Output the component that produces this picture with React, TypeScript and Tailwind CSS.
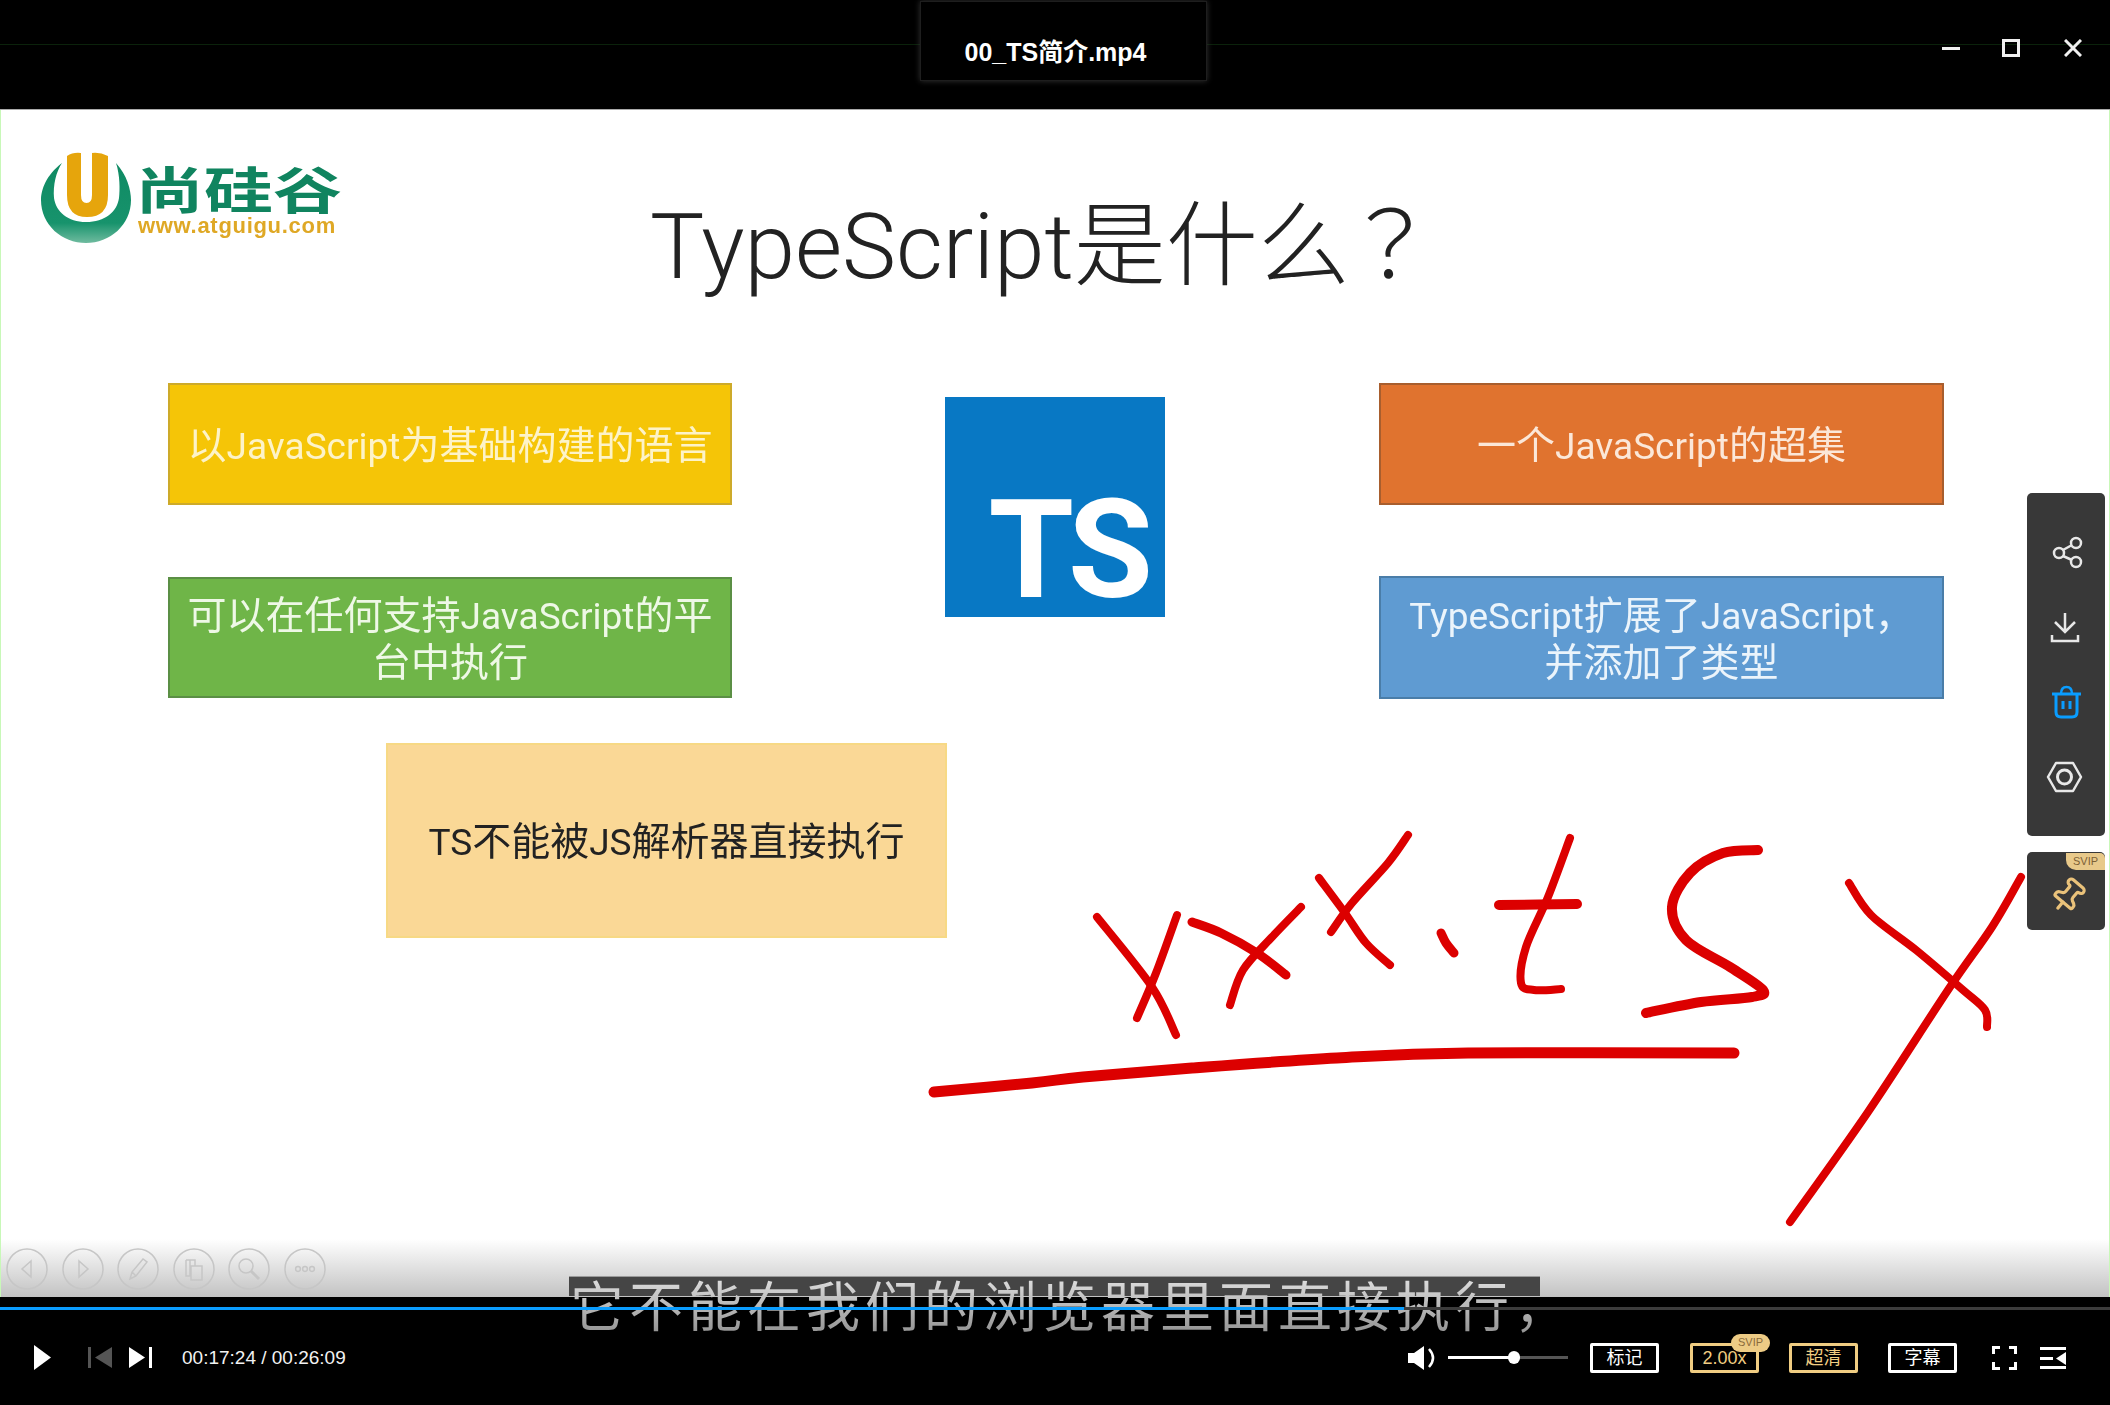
import React from "react";
import { Pin } from "lucide-react";

type P = [number, number];

function smooth(pts: P[]): string {
  let d = `M${pts[0][0]} ${pts[0][1]}`;
  for (let i = 0; i < pts.length - 1; i++) {
    const p0 = pts[Math.max(i - 1, 0)];
    const p1 = pts[i];
    const p2 = pts[i + 1];
    const p3 = pts[Math.min(i + 2, pts.length - 1)];
    const c1x = p1[0] + (p2[0] - p0[0]) / 6;
    const c1y = p1[1] + (p2[1] - p0[1]) / 6;
    const c2x = p2[0] - (p3[0] - p1[0]) / 6;
    const c2y = p2[1] - (p3[1] - p1[1]) / 6;
    d += ` C${c1x} ${c1y} ${c2x} ${c2y} ${p2[0]} ${p2[1]}`;
  }
  return d;
}

const strokes: { w: number; pts: P[] }[] = [
  { w: 8, pts: [[1096, 917], [1151, 987], [1175, 1035]] },
  { w: 8, pts: [[1176, 915], [1155, 973], [1136, 1018]] },
  { w: 9, pts: [[1191, 922], [1220, 933], [1256, 953], [1285, 975]] },
  { w: 8, pts: [[1300, 907], [1271, 937], [1242, 970], [1229, 1005]] },
  { w: 8, pts: [[1318, 878], [1344, 913], [1365, 943], [1389, 965]] },
  { w: 8, pts: [[1407, 835], [1387, 863], [1351, 903], [1330, 932]] },
  { w: 9, pts: [[1440, 933], [1445, 943], [1453, 953]] },
  { w: 8, pts: [[1569, 838], [1547, 897], [1525, 947], [1520, 983], [1533, 990], [1560, 989]] },
  { w: 10, pts: [[1498, 905], [1576, 904]] },
  { w: 10, pts: [[1757, 850], [1722, 853], [1689, 873], [1671, 907], [1685, 940], [1729, 967], [1762, 990], [1751, 997], [1700, 1002], [1645, 1013]] },
  { w: 8, pts: [[1848, 883], [1870, 915], [1915, 950], [1962, 990], [1984, 1010], [1986, 1027]] },
  { w: 8, pts: [[2020, 877], [1991, 927], [1947, 990], [1867, 1112], [1789, 1222]] },
  { w: 11, pts: [[933, 1092], [1031, 1083], [1082, 1077], [1191, 1068], [1336, 1058], [1467, 1053], [1733, 1053]] },
];

function Handwriting() {
  return (
    <svg className="absolute left-0 top-0 w-[2110px] h-[1187px]" viewBox="0 110 2110 1187" fill="none">
      {strokes.map((s, i) => (
        <path key={i} d={smooth(s.pts)} stroke="#dc0000" strokeWidth={s.w} strokeLinecap="round" strokeLinejoin="round" />
      ))}
    </svg>
  );
}

function LogoMark() {
  return (
    <svg className="w-[95px] h-[95px] shrink-0" viewBox="40 150 95 95">
      <defs>
        <linearGradient id="lg" x1="0" y1="0" x2="0" y2="1">
          <stop offset="0" stopColor="#0f8a63" />
          <stop offset="0.75" stopColor="#17936c" />
          <stop offset="1" stopColor="#6fbb9f" />
        </linearGradient>
      </defs>
      <path d="M62 163 C46 175 41 190 41 200 C41 225 62 243 86 243 C110 243 131 225 131 200 C131 190 127 175 116 163 C120 175 120 190 119 198 C117 212 105 222 86 222 C68 222 56 212 54 198 C53 185 56 172 62 163 Z" fill="url(#lg)" />
      <path d="M67 156 Q73 152 81 153 L81 195 Q81 203 86.5 203 Q92 203 92 195 L92 153 Q100 152 108 156 L108 195 Q108 217 87 217 Q67 217 67 195 Z" fill="#e6a50c" />
    </svg>
  );
}

function L({ children }: { children: React.ReactNode }) {
  return <span className="font-['Roboto',sans-serif] text-[37px] font-normal leading-none">{children}</span>;
}

function SlideBox({ className, children }: { className: string; children: React.ReactNode }) {
  return (
    <div className={`flex items-center justify-center text-center border-2 pb-[4px] font-['Noto_Sans_CJK_SC',sans-serif] text-[39px] leading-[47px] ${className}`}>
      {children}
    </div>
  );
}

function CircleBtn({ children }: { children: React.ReactNode }) {
  return (
    <svg className="w-[42px] h-[42px]" viewBox="0 0 42 42" fill="none" stroke="#c6c6c6" strokeWidth="1.5">
      <circle cx="21" cy="21" r="20" />
      {children}
    </svg>
  );
}

function OutlineBtn({ label, gold }: { label: string; gold?: boolean }) {
  return (
    <div className={`flex h-[30px] w-[69px] items-center justify-center rounded-[2px] border-[3px] text-[18px] leading-none ${gold ? "border-[#f0cd82] text-[#f0cd82]" : "border-white text-white"}`}>
      {label}
    </div>
  );
}

export default function App() {
  return (
    <div className="relative flex h-[1405px] w-[2110px] flex-col overflow-hidden bg-black font-['Liberation_Sans','Noto_Sans_CJK_SC',sans-serif]">
      {/* Title bar */}
      <div className="relative flex h-[110px] shrink-0 items-start border-b border-[#aaaaaa] bg-black pl-[920px] pr-[28px]">
        <div className="absolute left-0 right-0 top-[44px] h-px bg-[#0b220b]" />
        <div className="relative mt-px flex h-[80px] w-[287px] items-center justify-center border border-[#1e1e1e] bg-black pr-[16px] pt-[24px] text-[25px] font-bold text-white shadow-[0_0_6px_#333]">
          00_TS简介.mp4
        </div>
        <div className="relative ml-auto mt-[39px] flex items-start">
          <svg className="h-[18px] w-[18px]" viewBox="0 0 18 18"><rect x="0" y="8" width="18" height="3" fill="#f0f0f0" /></svg>
          <div className="ml-[42px] h-[18px] w-[18px] border-[3px] border-[#f0f0f0]" />
          <svg className="ml-[44px] h-[18px] w-[18px]" viewBox="0 0 18 18" stroke="#f0f0f0" strokeWidth="3"><path d="M1 1 L17 17 M17 1 L1 17" /></svg>
        </div>
      </div>

      {/* Slide */}
      <div className="relative flex-1 overflow-hidden border-x border-[#c8f8b8] bg-white">
        <div className="-ml-px flex h-[273px] items-start blur-[0.4px]">
          <div className="ml-[40px] mt-[40px] flex w-[320px] shrink-0">
            <LogoMark />
            <div className="flex flex-col">
              <div className="mt-[12px] h-[50px] origin-left scale-x-[1.38] whitespace-nowrap text-[50px] font-bold leading-[50px] text-[#10845f] font-['Noto_Sans_CJK_SC',sans-serif]">尚硅谷</div>
              <div className="ml-[3px] mt-[5px] h-[18px] whitespace-nowrap text-[22px] font-bold leading-[18px] tracking-[0.7px] text-[#dfa825]">www.atguigu.com</div>
            </div>
          </div>
          <h1 className="ml-[290px] mt-[68px] whitespace-nowrap text-[#222222] font-['Roboto','Noto_Sans_CJK_SC',sans-serif] font-light leading-[120px] text-[91px]">
            TypeScript<span className="text-[92px] font-['Noto_Sans_CJK_SC',sans-serif] font-light">是什么</span><span className="-ml-[6px] text-[92px] font-['Noto_Sans_CJK_TC',sans-serif] font-light">？</span>
          </h1>
        </div>

        <div className="-ml-px flex items-start pl-[168px] blur-[0.4px]">
          <div className="flex w-[564px] shrink-0 flex-col gap-[72px]">
            <SlideBox className="h-[122px] border-[#cdaa2a] bg-[#f5c507] text-[#fdf3c8]"><span>以<L>JavaScript</L>为基础构建的语言</span></SlideBox>
            <SlideBox className="h-[121px] border-[#5b8f45] bg-[#6fb548] text-[#eef8e6]">
              <span>可以在任何支持<L>JavaScript</L>的平<br />台中执行</span>
            </SlideBox>
          </div>
          <div className="ml-[213px] mt-[14px] flex h-[220px] w-[220px] shrink-0 items-end justify-end bg-[#0878c4] pb-[17px] pr-[17px]">
            <span className="font-['Roboto',sans-serif] text-[138px] font-bold leading-[100px] tracking-[-5px] text-white">TS</span>
          </div>
          <div className="ml-[214px] flex w-[565px] shrink-0 flex-col gap-[71px]">
            <SlideBox className="h-[122px] border-[#a85e2e] bg-[#e0732f] text-[#fbe7d8]"><span>一个<L>JavaScript</L>的超集</span></SlideBox>
            <SlideBox className="h-[123px] border-[#4a7da8] bg-[#5f9bd2] text-[#ebf4fb]">
              <span><L>TypeScript</L>扩展了<L>JavaScript</L>，<br />并添加了类型</span>
            </SlideBox>
          </div>
        </div>

        <div className="-ml-px mt-[44px] pl-[386px] blur-[0.4px]">
          <SlideBox className="h-[195px] w-[561px] border-[#f7d985] bg-[#fad896] text-[#222222]"><span><L>TS</L>不能被<L>JS</L>解析器直接执行</span></SlideBox>
        </div>

        <Handwriting />

        {/* bottom fade and slide toolbar */}
        <div className="absolute bottom-0 left-0 right-0 h-[58px] bg-gradient-to-b from-[#ffffff00] to-[#c2c2c2]" />
        <div className="absolute bottom-[7px] left-[5px] flex gap-[13.5px]">
          <CircleBtn><path d="M25 13 L16 21 L25 29 Z" /></CircleBtn>
          <CircleBtn><path d="M17 13 L26 21 L17 29 Z" /></CircleBtn>
          <CircleBtn><path d="M13 31 L15 24 L26 11 L30 14 L19 28 Z M15 24 L19 28" /></CircleBtn>
          <CircleBtn><path d="M13 12 H22 V18 M13 12 V28 H18 M18 18 H29 V32 H18 Z M17 12 V28" /></CircleBtn>
          <CircleBtn><circle cx="18" cy="18" r="7" /><path d="M23 23 L31 31" strokeWidth="3" /></CircleBtn>
          <CircleBtn><circle cx="14" cy="21" r="2.4" /><circle cx="21" cy="21" r="2.4" /><circle cx="28" cy="21" r="2.4" /></CircleBtn>
        </div>
      </div>

      {/* Side tool panel */}
      <div className="absolute left-[2027px] top-[493px] z-30 flex h-[343px] w-[78px] flex-col rounded-[5px] bg-[#383838]">
        <svg className="h-[343px] w-[78px]" viewBox="2027 493 78 343" fill="none" stroke="#e8e8e8" strokeWidth="2.5">
          <circle cx="2059" cy="553" r="5" />
          <circle cx="2076" cy="543" r="5" />
          <circle cx="2076" cy="562" r="5" />
          <path d="M2063 550 L2072 545 M2063 556 L2072 560" />
          <path d="M2065 613 V632 M2055 622 L2065 632 L2075 622" />
          <path d="M2052 635 V641 H2078 V635" />
          <g stroke="#0a9dff" strokeWidth="3">
            <path d="M2052 694 H2081" />
            <path d="M2056 694 V712 Q2056 717 2061 717 H2072 Q2077 717 2077 712 V694" />
            <path d="M2061 694 Q2061 687 2066.5 687 Q2072 687 2072 694" strokeWidth="2.5" />
            <path d="M2063 701 V709 M2070 701 V709" />
          </g>
          <path d="M2048 777 L2056 763 H2073 L2081 777 L2073 791 H2056 Z" strokeLinejoin="round" />
          <circle cx="2064.5" cy="777" r="7" strokeWidth="3" />
        </svg>
      </div>
      <div className="absolute left-[2027px] top-[852px] z-30 flex h-[78px] w-[78px] items-end justify-center rounded-[5px] bg-[#383838] pb-[15px]">
        <div className="absolute right-0 top-px flex h-[17px] w-[39px] items-center justify-center rounded-bl-[10px] rounded-tr-[5px] bg-[#e8c98a] text-[11px] leading-none text-[#7d6136]">SVIP</div>
        <Pin className="ml-[4px] h-[38px] w-[38px] rotate-[40deg] text-[#eac27a]" strokeWidth={2} />
      </div>

      {/* Subtitle */}
      <div className="absolute left-[569px] top-[1276px] z-10 h-[20px] w-[971px] border-t border-[#9a9a9a] bg-[#454545]" />
      <div className="absolute left-[570px] top-[1269px] z-10 whitespace-nowrap bg-gradient-to-b from-[#ececec] to-[#8c8c8c] bg-clip-text text-[54px] font-normal leading-[70px] tracking-[5px] text-transparent font-['Noto_Sans_CJK_SC',sans-serif]">
        它不能在我们的浏览器里面直接执行，
      </div>

      {/* Control bar */}
      <div className="flex h-[108px] shrink-0 flex-col bg-black">
        <div className="relative z-20 mt-[10px] h-[3px] shrink-0 bg-[#3c3c3c]">
          <div className="h-[3px] w-[1404px] bg-[#0a9dff]" />
        </div>
        <div className="flex flex-1 items-center pl-[34px] pr-[44px]">
          <svg className="h-[25px] w-[17px]" viewBox="0 0 17 25"><path d="M0 0 L17 12.5 L0 25 Z" fill="#fff" /></svg>
          <svg className="ml-[37px] h-[21px] w-[24px]" viewBox="0 0 24 21" fill="#555"><rect x="0" y="0" width="3" height="21" /><path d="M24 0 V21 L7 10.5 Z" /></svg>
          <svg className="ml-[17px] h-[21px] w-[23px]" viewBox="0 0 23 21" fill="#fff"><path d="M0 0 V21 L16 10.5 Z" /><rect x="20" y="0" width="3" height="21" /></svg>
          <span className="ml-[30px] whitespace-nowrap text-[19px] leading-none text-[#f2f2f2]">00:17:24 / 00:26:09</span>

          <div className="ml-auto flex items-center">
            <svg className="h-[24px] w-[30px]" viewBox="0 0 30 24" fill="none">
              <path d="M0 7 H6 L16 0 V24 L6 17 H0 Z" fill="#fff" />
              <path d="M21 3 Q29 12 21 21" stroke="#fff" strokeWidth="2.5" />
            </svg>
            <div className="relative ml-[10px] h-[3px] w-[120px] bg-[#555555]">
              <div className="h-[3px] w-[66px] bg-white" />
              <div className="absolute left-[60px] top-[-5px] h-[13px] w-[12px] rounded-full bg-white" />
            </div>
            <div className="ml-[22px]"><OutlineBtn label="标记" /></div>
            <div className="relative ml-[31px]">
              <OutlineBtn label="2.00x" gold />
              <div className="absolute left-[41px] top-[-9px] flex h-[18px] w-[39px] items-center justify-center rounded-[9px] bg-[#edcb85] text-[11px] leading-none text-[#8a6a3a]">SVIP</div>
            </div>
            <div className="ml-[30px]"><OutlineBtn label="超清" gold /></div>
            <div className="ml-[30px]"><OutlineBtn label="字幕" /></div>
            <svg className="ml-[35px] h-[24px] w-[25px]" viewBox="0 0 25 24" fill="none" stroke="#fff" strokeWidth="3">
              <path d="M8 1.5 H1.5 V8 M17 1.5 H23.5 V8 M8 22.5 H1.5 V16 M17 22.5 H23.5 V16" />
            </svg>
            <svg className="ml-[23px] h-[22px] w-[26px]" viewBox="0 0 26 22" fill="#fff">
              <rect x="0" y="0" width="26" height="3" />
              <rect x="0" y="10" width="13" height="3" />
              <path d="M16 11.5 L26 5 V18 Z" />
              <rect x="0" y="19" width="26" height="3" />
            </svg>
          </div>
        </div>
      </div>
    </div>
  );
}
